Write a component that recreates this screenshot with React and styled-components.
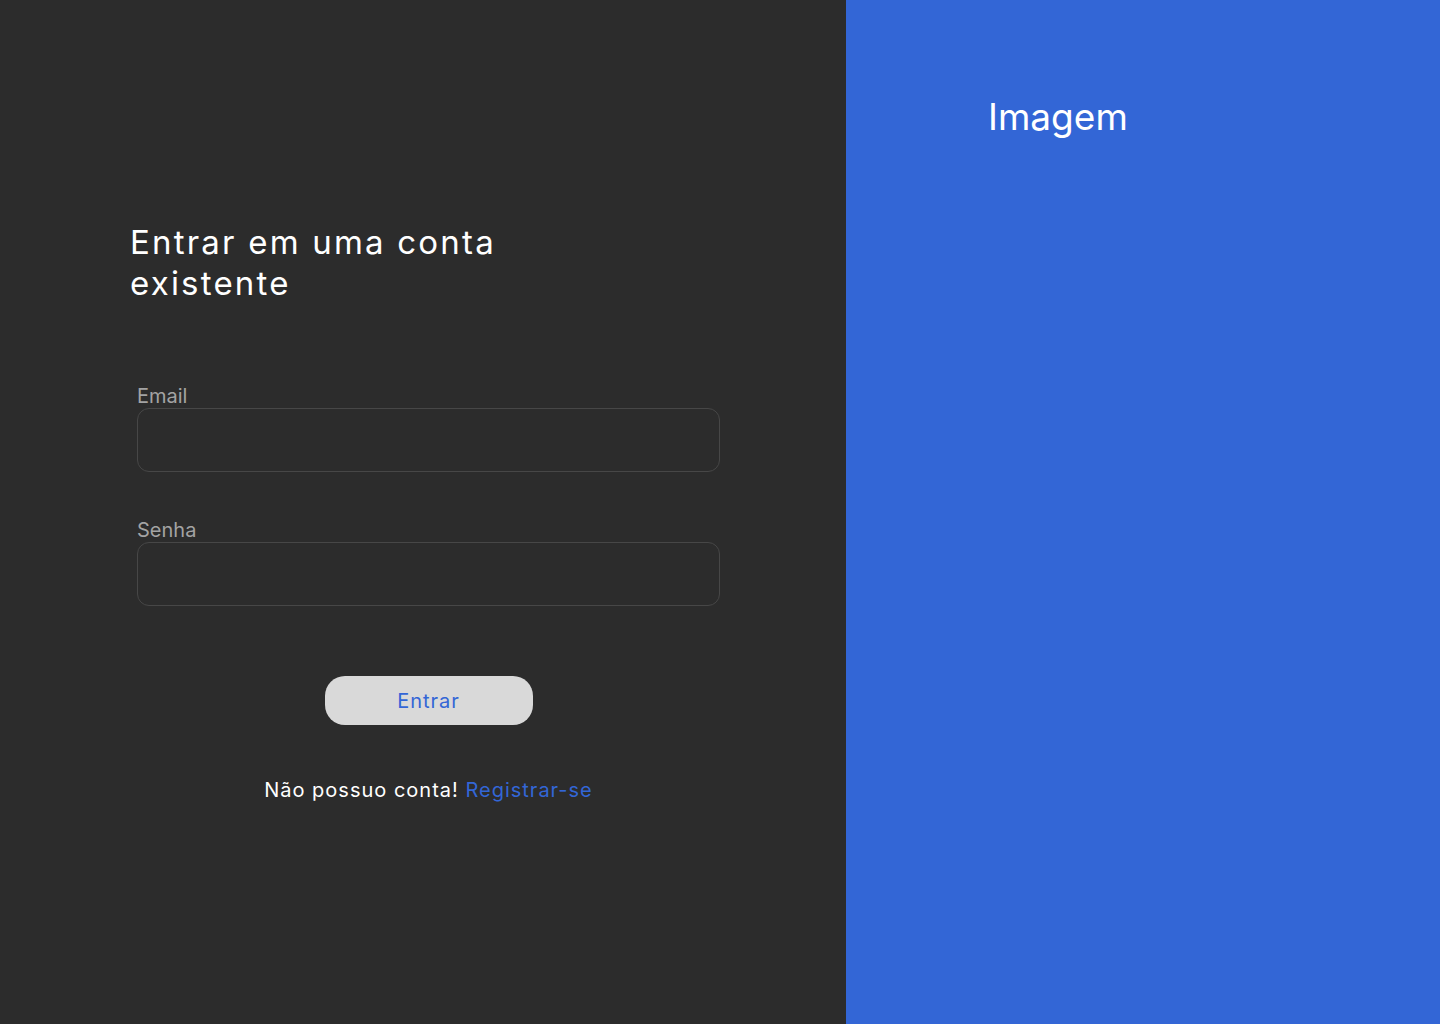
import React from "react";
import styled, { createGlobalStyle } from "styled-components";

const Global = createGlobalStyle`
  html, body { margin: 0; padding: 0; }
  body { font-family: Inter, "Noto Sans", sans-serif; background: #2c2c2c; }
  * { box-sizing: border-box; }
`;

const Page = styled.div`
  display: flex;
  width: 1440px;
  height: 1024px;
`;

const LeftPanel = styled.section`
  width: 846px;
  height: 100%;
  background: #2c2c2c;
  display: flex;
  flex-direction: column;
  padding: 222px 0 0 130px;
`;

const Title = styled.h1`
  margin: 0;
  width: 440px;
  font-family: Inter, sans-serif;
  font-weight: 400;
  font-size: 33px;
  line-height: 41px;
  letter-spacing: 2.2px;
  color: #ffffff;
`;

const Form = styled.form`
  margin: 80px 0 0 7px;
  width: 583px;
  display: flex;
  flex-direction: column;
`;

const Field = styled.div`
  display: flex;
  flex-direction: column;
  & + & { margin-top: 46px; }
`;

const Label = styled.label`
  font-family: Inter, sans-serif;
  font-size: 20px;
  line-height: 24px;
  color: #a3a3a3;
`;

const Input = styled.input`
  height: 64px;
  width: 100%;
  border: 1px solid #474747;
  border-radius: 12px;
  background: #2c2c2c;
  color: #fff;
  font-family: Inter, sans-serif;
  font-size: 18px;
  padding: 0 16px;
  outline: none;
`;

const Button = styled.button`
  align-self: center;
  margin-top: 70px;
  width: 208px;
  height: 49px;
  border: none;
  border-radius: 20px;
  background: #d9d9d9;
  color: #3366d6;
  font-family: Inter, sans-serif;
  font-size: 20px;
  letter-spacing: 1px;
  cursor: pointer;
`;

const Footer = styled.p`
  margin: 53px 0 0;
  text-align: center;
  font-family: Inter, sans-serif;
  font-size: 20px;
  line-height: 24px;
  letter-spacing: 1px;
  color: #ffffff;
`;

const Link = styled.a`
  color: #3366d6;
  text-decoration: none;
`;

const RightPanel = styled.section`
  flex: 1;
  height: 100%;
  background: #3366d6;
  padding: 94px 0 0 142px;
`;

const ImageText = styled.h2`
  margin: 0;
  font-family: Inter, sans-serif;
  font-weight: 400;
  font-size: 37px;
  line-height: 46px;
  color: #ffffff;
`;

export default function App() {
  return (
    <>
      <Global />
      <Page>
        <LeftPanel>
          <Title>Entrar em uma conta existente</Title>
          <Form onSubmit={(e) => e.preventDefault()}>
            <Field>
              <Label htmlFor="email">Email</Label>
              <Input id="email" type="email" />
            </Field>
            <Field>
              <Label htmlFor="senha">Senha</Label>
              <Input id="senha" type="password" />
            </Field>
            <Button type="submit">Entrar</Button>
            <Footer>
              Não possuo conta! <Link href="#">Registrar-se</Link>
            </Footer>
          </Form>
        </LeftPanel>
        <RightPanel>
          <ImageText>Imagem</ImageText>
        </RightPanel>
      </Page>
    </>
  );
}
